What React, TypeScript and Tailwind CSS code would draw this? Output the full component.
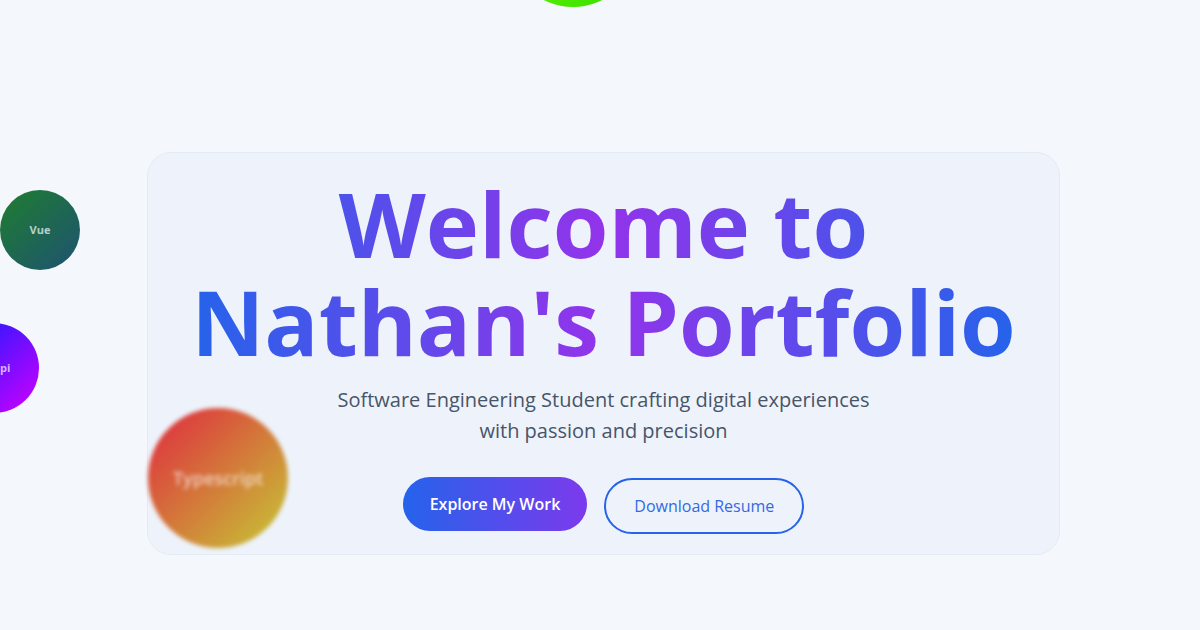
const bubbles = [
  {
    label: "",
    className:
      "left-[508px] top-[-123px] w-[130px] h-[130px] bg-[linear-gradient(135deg,#7dff00,#33dd00)]",
    text: "",
  },
  {
    label: "Vue",
    className:
      "left-0 top-[190px] w-[80px] h-[80px] bg-[linear-gradient(135deg,#1f7d2f,#1e5272)]",
    text: "text-[11px] font-bold text-white/70",
  },
  {
    label: "Strapi",
    className:
      "left-[-51px] top-[323px] w-[90px] h-[90px] bg-[linear-gradient(135deg,#0a1cff,#d200ff)]",
    text: "text-[11px] font-bold text-white/70",
  },
  {
    label: "Typescript",
    className:
      "left-[148px] top-[408px] w-[140px] h-[140px] bg-[linear-gradient(135deg,#e0283f,#c6c935)] blur-[2px]",
    text: "text-[18px] font-semibold text-white/65",
  },
];

export default function App() {
  return (
    <div
      className="relative min-h-[630px] w-full overflow-hidden bg-[#f4f7fb]"
      style={{ fontFamily: '"Open Sans", "Liberation Sans", sans-serif' }}
    >
      <div className="pt-[152px] pl-[147px]">
        {/* Hero card */}
        <section className="flex w-[913px] flex-col items-center rounded-3xl border border-[#e5ebf4] bg-[#eef3fb] px-6 pt-[21px] pb-[20px] text-center">
          <h1 className="w-fit whitespace-nowrap bg-[linear-gradient(to_right,#2563eb,#9333ea,#2563eb)] bg-clip-text text-[90px] font-bold leading-[98px] text-transparent">
            Welcome to
            <br />
            Nathan's Portfolio
          </h1>
          <p className="mt-[14px] text-[20px] leading-[31px] text-[#475569]">
            Software Engineering Student crafting digital experiences
            <br />
            with passion and precision
          </p>
          <div className="mt-[31px] flex items-start justify-center gap-[17px]">
            <button className="h-[54px] rounded-full bg-[linear-gradient(to_right,#2563eb,#7c3aed)] px-[27px] text-[16px] font-semibold text-white">
              Explore My Work
            </button>
            <button className="mt-px h-[56px] rounded-full border-2 border-[#2563eb] px-[28px] text-[16px] text-[#3469e4]">
              Download Resume
            </button>
          </div>
        </section>
      </div>

      {/* Floating tech bubbles */}
      {bubbles.map((b, i) => (
        <div
          key={i}
          className={`absolute flex items-center justify-center rounded-full ${b.className}`}
        >
          {b.label && <span className={b.text}>{b.label}</span>}
        </div>
      ))}
    </div>
  );
}
